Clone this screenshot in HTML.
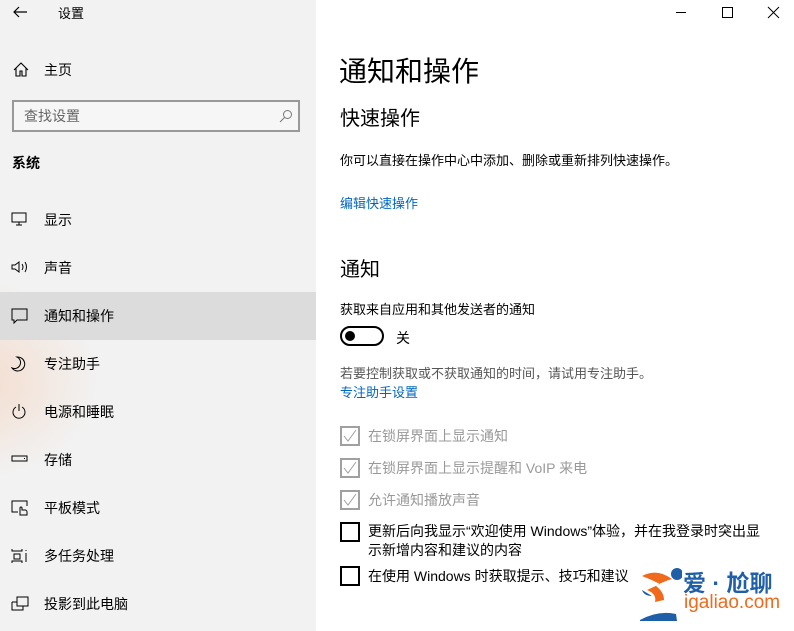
<!DOCTYPE html>
<html><head><meta charset="utf-8"><style>
*{margin:0;padding:0;box-sizing:border-box}
body{width:794px;height:631px;overflow:hidden;font-family:"Liberation Sans","Noto Sans CJK SC",sans-serif;color:#000;position:relative;background:#fff}
.side{position:absolute;left:0;top:0;width:316px;height:631px;background:#f2f2f2;overflow:hidden}
.glow{position:absolute;left:-140px;top:280px;width:240px;height:200px;border-radius:50%;background:radial-gradient(ellipse at center,rgba(245,200,170,.5),rgba(242,242,242,0) 70%)}
.t{position:absolute;white-space:nowrap}
.item{position:absolute;left:0;width:316px;height:48px}
.item .lbl{position:absolute;left:44px;top:14px;font-size:14px}
.item svg{position:absolute;left:11px;top:16px}
.sel{background:#dcdcdc}
.chk{position:absolute;left:340px;width:20px;height:20px;border:2px solid #a0a0a0}
.chk svg{position:absolute;left:1px;top:1px}
.chk.on{border-color:#000}
.ct{position:absolute;left:368px;font-size:14px;color:#999;white-space:nowrap}
</style></head><body>
<div class="side"><div class="glow"></div>
<svg class="t" style="left:12px;top:5px" width="16" height="14"><path d="M15 7H2M7 2L2 7l5 5" stroke="#000" fill="none" stroke-width="1.2"/></svg>
<div class="t" style="left:58px;top:3px;font-size:13px">设置</div>
<svg class="t" style="left:13px;top:62px" width="16" height="15"><path d="M1 8L8 1l7 7M3 6v8h4v-5h2v5h4V6" stroke="#000" fill="none" stroke-width="1.1"/></svg>
<div class="t" style="left:44px;top:60px;font-size:14px">主页</div>
<div class="t" style="left:12px;top:100px;width:288px;height:32px;border:2px solid #999;background:#f6f6f6"></div>
<div class="t" style="left:24px;top:106px;font-size:14px;color:#666">查找设置</div>
<svg class="t" style="left:279px;top:109px" width="14" height="14"><circle cx="8.5" cy="5.5" r="4" stroke="#777" fill="none"/><path d="M5.5 8.5L1 13" stroke="#777"/></svg>
<div class="t" style="left:12px;top:153px;font-size:14px;font-weight:bold">系统</div>
<div class="item" style="top:196px"><svg width="16" height="14"><path d="M1 1h14v9H1zM8 10v3M5 13h6" stroke="#000" fill="none"/></svg><div class="lbl">显示</div></div>
<div class="item" style="top:244px"><svg width="20" height="14"><path d="M1 5h3l4-3v10l-4-3H1z M11 4q2 3 0 6M14 2q3 5 0 10" stroke="#000" fill="none"/></svg><div class="lbl">声音</div></div>
<div class="item sel" style="top:292px"><svg width="18" height="16"><path d="M1 1h15v11H6l-3 3v-3H1z" stroke="#000" fill="none"/></svg><div class="lbl">通知和操作</div></div>
<div class="item" style="top:340px"><svg width="16" height="16"><path d="M6 1a7 7 0 1 1-5 11a6 6 0 0 0 5-11z" stroke="#000" fill="none"/></svg><div class="lbl">专注助手</div></div>
<div class="item" style="top:388px"><svg width="16" height="16"><path d="M5 3a6 6 0 1 0 6 0M8 0v7" stroke="#000" fill="none"/></svg><div class="lbl">电源和睡眠</div></div>
<div class="item" style="top:436px"><svg width="18" height="14"><path d="M1 4h15v5H1zM13 6.5h1" stroke="#000" fill="none"/></svg><div class="lbl">存储</div></div>
<div class="item" style="top:484px"><svg width="18" height="16"><path d="M7 12H1V1h15v5M9 15V8a1 1 0 0 1 2 0v2h3a2 2 0 0 1 2 2v3z" stroke="#000" fill="none"/></svg><div class="lbl">平板模式</div></div>
<div class="item" style="top:532px"><svg width="18" height="16"><path d="M1 1v2h10V1M1 15v-2h10v2M3 6h6v5H3zM15 2v1M15 5v9" stroke="#000" fill="none"/></svg><div class="lbl">多任务处理</div></div>
<div class="item" style="top:580px"><svg width="18" height="16"><path d="M6 1h11v9H6zM1 6h5M1 6v8h11v-4M4 14h5" stroke="#000" fill="none"/></svg><div class="lbl">投影到此电脑</div></div>
</div>
<svg class="t" style="left:676px;top:6px" width="110" height="14"><path d="M0 6.5h10" stroke="#000"/><rect x="46.5" y="1.5" width="10" height="10" stroke="#000" fill="none"/><path d="M92 1l11 11M103 1L92 12" stroke="#000"/></svg>
<div class="t" style="left:339px;top:50px;font-size:28px">通知和操作</div>
<div class="t" style="left:340px;top:102px;font-size:20px">快速操作</div>
<div class="t" style="left:340px;top:150px;font-size:13px">你可以直接在操作中心中添加、删除或重新排列快速操作。</div>
<div class="t" style="left:340px;top:193px;font-size:13px;color:#0067c0">编辑快速操作</div>
<div class="t" style="left:340px;top:253px;font-size:20px">通知</div>
<div class="t" style="left:340px;top:299px;font-size:13px">获取来自应用和其他发送者的通知</div>
<div class="t" style="left:340px;top:326px;width:44px;height:20px;border:2px solid #000;border-radius:10px"></div>
<div class="t" style="left:345px;top:331px;width:10px;height:10px;border-radius:50%;background:#000"></div>
<div class="t" style="left:396px;top:328px;font-size:14px">关</div>
<div class="t" style="left:340px;top:363px;font-size:13px;color:#555">若要控制获取或不获取通知的时间，请试用专注助手。</div>
<div class="t" style="left:340px;top:382px;font-size:13px;color:#0067c0">专注助手设置</div>
<div class="chk" style="top:426px"><svg width="14" height="14"><path d="M1 7l4 5 8-11" stroke="#a0a0a0" fill="none"/></svg></div>
<div class="ct" style="top:426px">在锁屏界面上显示通知</div>
<div class="chk" style="top:458px"><svg width="14" height="14"><path d="M1 7l4 5 8-11" stroke="#a0a0a0" fill="none"/></svg></div>
<div class="ct" style="top:458px">在锁屏界面上显示提醒和 VoIP 来电</div>
<div class="chk" style="top:490px"><svg width="14" height="14"><path d="M1 7l4 5 8-11" stroke="#a0a0a0" fill="none"/></svg></div>
<div class="ct" style="top:490px">允许通知播放声音</div>
<div class="chk on" style="top:522px"></div>
<div class="ct" style="top:522px;color:#000;line-height:19px">更新后向我显示“欢迎使用 Windows”体验，并在我登录时突出显<br>示新增内容和建议的内容</div>
<div class="chk on" style="top:566px"></div>
<div class="ct" style="top:566px;color:#000">在使用 Windows 时获取提示、技巧和建议</div>
<svg class="t" style="left:632px;top:562px" width="50" height="62"><circle cx="45" cy="12" r="6" fill="#1f5fa8"/><path d="M10 14q15-8 30 3q-10 3-16 7q8 6 8 14l-9 2q2-8-8-12l13-6q-8-4-18-8z" fill="#ef6a1c"/><path d="M10 28q2 6 10 6M8 58q18-10 36-6l1 7H8z" fill="#1f5fa8"/></svg>
<div class="t" style="left:683px;top:564px;font-size:23px;color:#1f5fa8;font-weight:bold">爱 · 尬聊</div>
<div class="t" style="left:684px;top:592px;font-size:19px;color:#ef6a1c">igaliao.com</div>
</body></html>
